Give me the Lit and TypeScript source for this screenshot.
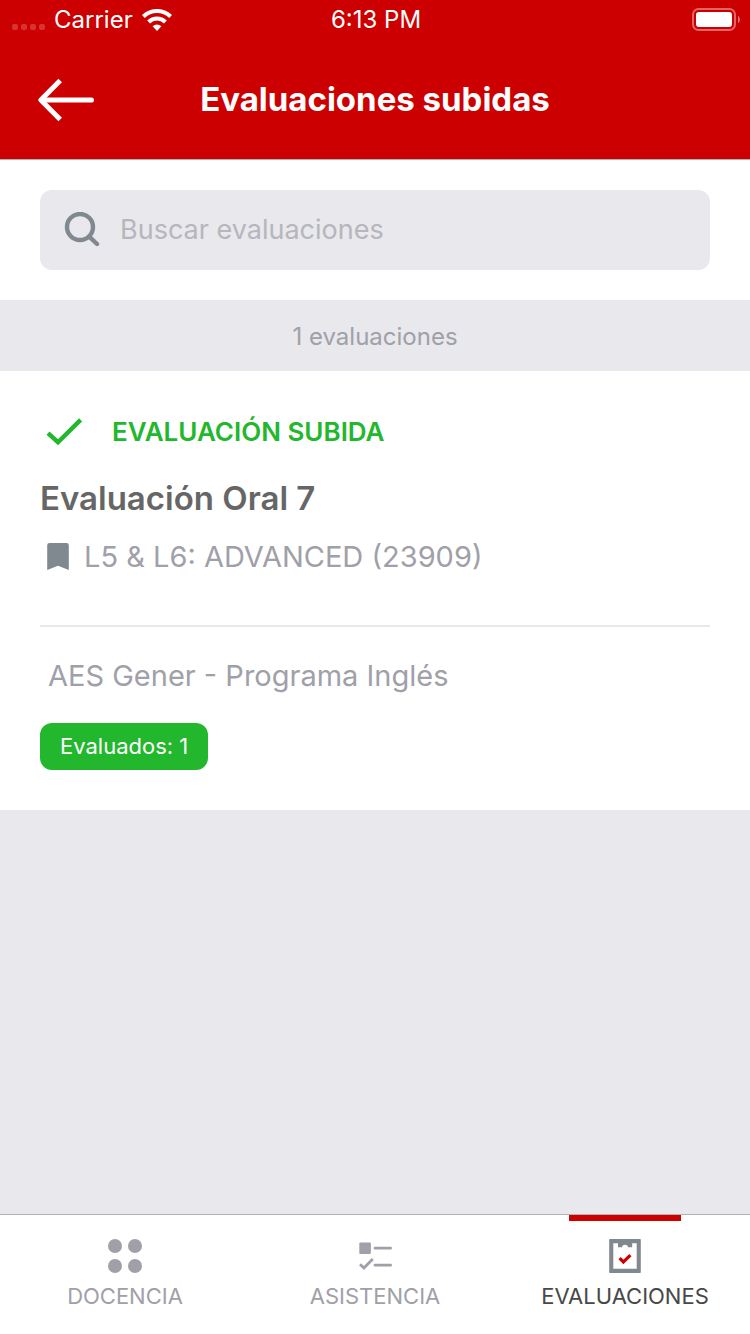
import { LitElement, html, css, svg, TemplateResult } from "lit";
import { customElement, property, state } from "lit/decorators.js";
import { classMap } from "lit/directives/class-map.js";

interface Evaluation {
  title: string;
  course: string;
  company: string;
  evaluated: number;
}

interface Tab {
  id: string;
  label: string;
  icon: TemplateResult;
}

const EVALUATIONS: Evaluation[] = [
  {
    title: "Evaluación Oral 7",
    course: "L5 & L6: ADVANCED (23909)",
    company: "AES Gener - Programa Inglés",
    evaluated: 1,
  },
];

const TABS: Tab[] = [
  {
    id: "docencia",
    label: "DOCENCIA",
    icon: svg`
      <circle cx="11" cy="10" r="7" fill="currentColor" />
      <circle cx="31" cy="10" r="7" fill="currentColor" />
      <circle cx="11" cy="30" r="7" fill="currentColor" />
      <circle cx="31" cy="30" r="7" fill="currentColor" />`,
  },
  {
    id: "asistencia",
    label: "ASISTENCIA",
    icon: svg`
      <rect x="5.3" y="6.4" width="11.6" height="11.6" rx="1" fill="currentColor" />
      <path d="M21 12.2H36.6M21 29.2H36.6" stroke="currentColor" stroke-width="2.8" stroke-linecap="round" fill="none" />
      <path d="M6 28.2L9.9 32L18.8 23" stroke="currentColor" stroke-width="2.8" fill="none" />`,
  },
  {
    id: "evaluaciones",
    label: "EVALUACIONES",
    icon: svg`
      <path fill="#808890" fill-rule="evenodd" d="M6 3H36a.8.8 0 0 1 .8.8V36.2a.8.8 0 0 1-.8.8H6a.8.8 0 0 1-.8-.8V3.8a.8.8 0 0 1 .8-.8ZM9.3 7.2V32.8H32.7V7.2H28.2V11.2H24C24 9.8 22.8 8.8 21 8.8S18 9.8 18 11.2H14V7.2Z" />
      <path d="M15.6 22.2L19.4 26L26.4 19.2" stroke="#cc0000" stroke-width="3.2" fill="none" />`,
  },
];

@customElement("status-bar")
export class StatusBar extends LitElement {
  static styles = css`
    :host {
      display: grid;
      grid-template-columns: 1fr auto 1fr;
      align-items: center;
      height: 40px;
      padding: 0 10px 0 12px;
      font-size: 24px;
      line-height: 28px;
      color: #fff;
    }
    .carrier {
      display: flex;
      align-items: center;
      gap: 9px;
    }
    .power {
      display: flex;
      justify-content: flex-end;
    }
    svg {
      display: block;
    }
  `;

  render() {
    return html`
      <div class="carrier">
        <svg width="33" height="22" viewBox="0 0 33 22" fill="#fff" fill-opacity="0.2" aria-hidden="true">
          <rect x="0" y="15" width="6" height="6" rx="2" />
          <rect x="9" y="15" width="6" height="6" rx="2" />
          <rect x="18" y="15" width="6" height="6" rx="2" />
          <rect x="27" y="15" width="6" height="6" rx="2" />
        </svg>
        <span>Carrier</span>
        <svg width="30" height="22" viewBox="0 0 30 22" fill="none" stroke="#fff" stroke-width="4" aria-hidden="true">
          <path d="M1.4 7.5A19.5 19.5 0 0 1 28.6 7.5" />
          <path d="M6.6 13A12 12 0 0 1 23.4 13" />
          <path d="M10.6 17.3A6.3 6.3 0 0 1 19.4 17.3L15 22Z" fill="#fff" stroke="none" />
        </svg>
      </div>
      <time>6:13 PM</time>
      <div class="power">
        <svg width="48" height="24" viewBox="0 0 48 24" aria-hidden="true">
          <rect x="1" y="1" width="42" height="21" rx="5.5" fill="none" stroke="#fff" stroke-opacity="0.4" stroke-width="2" />
          <rect x="4" y="4" width="36" height="15" rx="3" fill="#fff" />
          <path d="M46 8C48.4 9 48.4 14 46 15Z" fill="#fff" fill-opacity="0.5" />
        </svg>
      </div>
    `;
  }
}

@customElement("evaluation-card")
export class EvaluationCard extends LitElement {
  @property({ attribute: false }) item!: Evaluation;

  static styles = css`
    :host {
      display: block;
      padding: 40px;
      background: #fff;
    }
    .status {
      display: flex;
      align-items: center;
      gap: 24px;
      height: 40px;
      color: #22b72c;
      font-size: 26px;
      font-weight: 600;
    }
    h2 {
      margin: 26px 0 0;
      font-size: 33px;
      line-height: 42px;
      font-weight: 600;
      color: #666;
    }
    .course {
      display: flex;
      align-items: center;
      gap: 8px;
      margin-top: 18px;
      padding-bottom: 48px;
      border-bottom: 2px solid #e8e8ed;
    }
    .course,
    .company {
      font-size: 29px;
      line-height: 40px;
      color: #a0a0a8;
    }
    .company {
      margin: 29px 8px 27px;
    }
    .badge {
      display: inline-block;
      padding: 0 20px;
      border-radius: 12px;
      background: #22b72c;
      color: #fff;
      font-size: 22px;
      line-height: 47px;
    }
    svg {
      display: block;
      flex: none;
    }
  `;

  render() {
    const { title, course, company, evaluated } = this.item;
    return html`
      <article>
        <div class="status">
          <svg width="48" height="40" viewBox="0 0 48 40" aria-hidden="true">
            <path d="M8 22.2L18 31.2L40.6 8.9" fill="none" stroke="currentColor" stroke-width="4.4" />
          </svg>
          <span>EVALUACIÓN SUBIDA</span>
        </div>
        <h2>${title}</h2>
        <div class="course">
          <svg width="36" height="36" viewBox="0 0 36 36" aria-hidden="true">
            <path d="M9.5 4H26.5A2.3 2.3 0 0 1 28.8 6.3V31L18 26.8L7.2 31V6.3A2.3 2.3 0 0 1 9.5 4Z" fill="#808890" />
          </svg>
          <span>${course}</span>
        </div>
        <div class="company">${company}</div>
        <span class="badge">Evaluados: ${evaluated}</span>
      </article>
    `;
  }
}

@customElement("app-root")
export class AppRoot extends LitElement {
  @state() private query = "";
  @state() private tab = "evaluaciones";

  static styles = css`
    :host {
      display: flex;
      flex-direction: column;
      min-height: 100vh;
      background: #e8e8ed;
      font-family: Inter, "Liberation Sans", sans-serif;
    }
    header {
      background: #cc0000;
      border-bottom: 1px solid #b2b2b2;
    }
    .title-bar {
      display: grid;
      grid-template-columns: 60px 1fr 60px;
      align-items: center;
      height: 119px;
      padding: 0 36px;
      color: #fff;
    }
    h1 {
      margin: 0 0 2px;
      text-align: center;
      font-size: 33px;
      line-height: 40px;
      font-weight: 700;
    }
    button {
      padding: 0;
      border: 0;
      background: none;
      color: inherit;
      font: inherit;
      cursor: pointer;
    }
    svg {
      display: block;
      flex: none;
    }
    .search {
      padding: 30px 40px;
      background: #fff;
    }
    .field {
      display: flex;
      align-items: center;
      gap: 20px;
      height: 80px;
      padding: 0 24px;
      border-radius: 12px;
      background: #e8e8ed;
    }
    input {
      flex: 1;
      min-width: 0;
      padding: 0;
      border: 0;
      outline: 0;
      background: none;
      color: #666;
      font: inherit;
      font-size: 27px;
      line-height: 36px;
    }
    input::placeholder {
      color: #b6b6bc;
      opacity: 1;
    }
    .count {
      padding: 23px 0 20px;
      text-align: center;
      font-size: 24px;
      line-height: 28px;
      color: #a0a0a8;
    }
    main {
      flex: 1;
    }
    nav {
      display: grid;
      grid-template-columns: repeat(3, 1fr);
      border-top: 1px solid #b2b2b2;
      background: #fff;
    }
    .tab {
      display: flex;
      flex-direction: column;
      align-items: center;
      color: #a0a0a8;
      font-size: 22px;
      line-height: 28px;
      padding-bottom: 24px;
    }
    .marker {
      width: 112px;
      height: 6px;
      margin-bottom: 15px;
    }
    .tab svg {
      margin-bottom: 6px;
    }
    .active {
      color: #484848;
    }
    .active .marker {
      background: #cc0000;
    }
  `;

  render() {
    const needle = this.query.toLowerCase();
    const items = EVALUATIONS.filter((e) => e.title.toLowerCase().includes(needle));
    return html`
      <header>
        <status-bar></status-bar>
        <div class="title-bar">
          <button aria-label="Volver">
            <svg width="60" height="44" viewBox="0 0 60 44" fill="none" stroke="#fff" aria-hidden="true">
              <path d="M6 22H55.4" stroke-width="5.2" stroke-linecap="round" />
              <path d="M24.2 2.4L4.8 22L24.2 41.6" stroke-width="5" stroke-linejoin="round" />
            </svg>
          </button>
          <h1>Evaluaciones subidas</h1>
        </div>
      </header>
      <div class="search">
        <label class="field">
          <svg width="36" height="36" viewBox="0 0 36 36" fill="none" stroke="#808890" aria-hidden="true">
            <circle cx="16" cy="15" r="13" stroke-width="4.4" />
            <path d="M25 24.4L33 32" stroke-width="4.4" stroke-linecap="round" />
          </svg>
          <input
            type="text"
            aria-label="Buscar evaluaciones"
            placeholder="Buscar evaluaciones"
            .value=${this.query}
            @input=${(e: Event) => (this.query = (e.target as HTMLInputElement).value)}
          />
        </label>
      </div>
      <div class="count">${items.length} evaluaciones</div>
      <main>${items.map((item) => html`<evaluation-card .item=${item}></evaluation-card>`)}</main>
      <nav>
        ${TABS.map(
          (t) => html`
            <button
              class=${classMap({ tab: true, active: t.id === this.tab })}
              @click=${() => (this.tab = t.id)}
            >
              <span class="marker"></span>
              <svg width="42" height="40" viewBox="0 0 42 40" aria-hidden="true">${t.icon}</svg>
              <span>${t.label}</span>
            </button>
          `
        )}
      </nav>
    `;
  }
}
